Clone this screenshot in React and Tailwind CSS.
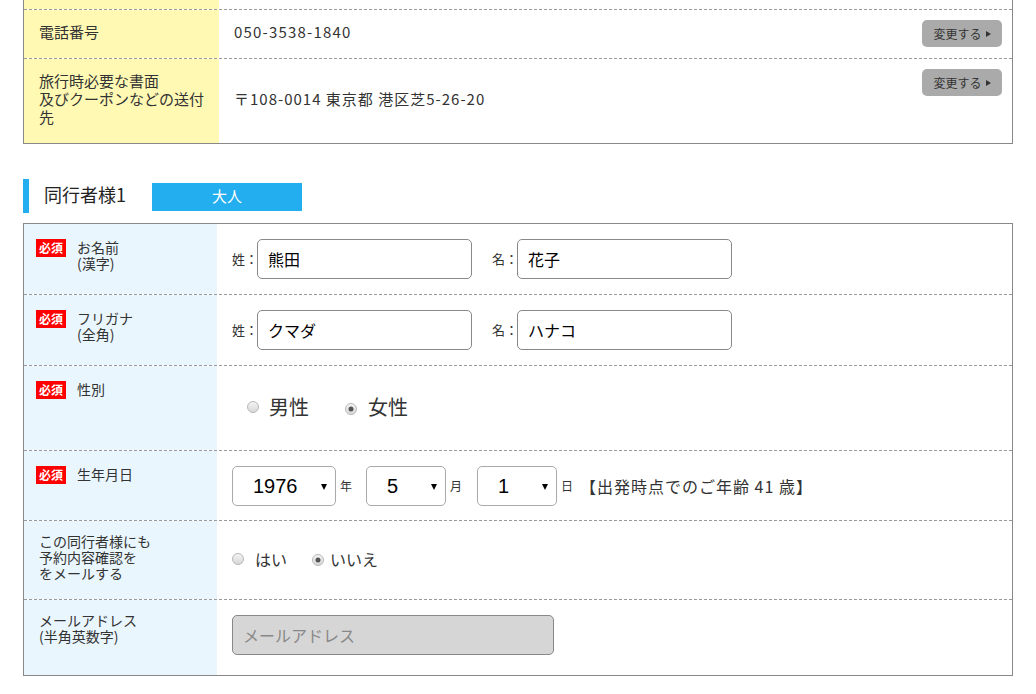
import React from "react";

const F = "font-['Meiryo','Noto_Sans_CJK_JP',sans-serif]";

function Badge() {
  return (
    <span className="inline-flex items-center justify-center w-[30px] h-[18px] bg-[#f00] text-white text-[12px] font-bold leading-none shrink-0">
      必須
    </span>
  );
}

function Radio({ checked }) {
  return (
    <span className="relative inline-block w-[12px] h-[12px] rounded-full border border-[#b8b8b8] bg-gradient-to-b from-[#f4f4f4] to-[#d8d8d8] shrink-0">
      {checked && (
        <span className="absolute left-1/2 top-1/2 -translate-x-1/2 -translate-y-1/2 w-[5px] h-[5px] rounded-full bg-[#555]" />
      )}
    </span>
  );
}

function ChangeBtn() {
  return (
    <div className="flex items-center justify-center gap-[4px] w-[80px] h-[27px] rounded-[5px] bg-[#aaaaaa] text-[12px] text-[#333]">
      <span>変更する</span>
      <span className="w-0 h-0 border-y-[3.5px] border-y-transparent border-l-[5px] border-l-[#333]" />
    </div>
  );
}

function Select({ value, w }) {
  return (
    <div className={`relative flex items-center h-[40px] rounded-[5px] border border-[#aaa] bg-white pl-[20px] text-[20px] text-black ${w}`}>
      <span className="font-['Liberation_Sans',sans-serif]">{value}</span>
      <span className="absolute right-[8px] top-[17px] w-0 h-0 border-x-[3.5px] border-x-transparent border-t-[6px] border-t-black" />
    </div>
  );
}

function TextInput({ value }) {
  return (
    <div className="flex items-center w-[215px] h-[40px] rounded-[5px] border border-[#888] bg-white pl-[10px] text-[16px] text-black">
      {value}
    </div>
  );
}

function LabelCell({ badge, children }) {
  return (
    <div
      className={`w-[193px] shrink-0 bg-[#eaf6fd] pl-[12px] flex gap-[11px] text-[14px] leading-[16px] text-[#333] whitespace-nowrap ${
        badge ? "pt-[15px]" : "pt-[12px]"
      }`}
    >
      {badge && <Badge />}
      <div className={badge ? "" : "pl-[3px]"}>{children}</div>
    </div>
  );
}

export default function App() {
  return (
    <div className={`w-[1036px] h-[694px] overflow-hidden bg-white text-[#333] ${F}`}>
      <div className="ml-[23px] w-[990px]">
        {/* top table */}
        <div className="border-x border-b border-[#888]">
          <div className="flex h-[9px]">
            <div className="w-[195px] bg-[#fff9b4]" />
            <div className="flex-1" />
          </div>
          <div className="flex h-[49px] border-t border-dashed border-[#999]">
            <div className="w-[195px] shrink-0 bg-[#fff9b4] flex items-center pl-[15px] pb-[3px] text-[15px]">
              電話番号
            </div>
            <div className="flex-1 flex justify-between pl-[15px] pr-[10px]">
              <div className="self-center pb-[3px] text-[15px] tracking-[1.2px]">050-3538-1840</div>
              <div className="pt-[10px]">
                <ChangeBtn />
              </div>
            </div>
          </div>
          <div className="flex h-[85px] border-t border-dashed border-[#999]">
            <div className="w-[195px] shrink-0 bg-[#fff9b4] flex items-center pl-[15px] pb-[4px] text-[15px] leading-[18px] whitespace-nowrap">
              <div>
                旅行時必要な書面
                <br />
                及びクーポンなどの送付
                <br />
                先
              </div>
            </div>
            <div className="flex-1 flex justify-between pl-[15px] pr-[10px]">
              <div className="self-center pb-[3px] text-[15px] tracking-[1px]">〒108-0014 東京都 港区芝5-26-20</div>
              <div className="pt-[10px]">
                <ChangeBtn />
              </div>
            </div>
          </div>
        </div>

        {/* heading */}
        <div className="mt-[35px] flex items-center h-[34px] border-l-[6px] border-[#22aeef]">
          <div className="pl-[15px] pb-[3px] text-[18px] text-[#222] w-[123px]">同行者様1</div>
          <div className="w-[150px] h-[28px] bg-[#22aeef] text-white text-[15px] flex items-center justify-center mt-[1px]">
            大人
          </div>
        </div>

        {/* bottom table */}
        <div className="mt-[10px] border border-[#888]">
          {/* name */}
          <div className="flex h-[70px]">
            <LabelCell badge>
              お名前
              <br />
              (漢字)
            </LabelCell>
            <div className="flex-1 flex items-center pl-[15px] text-[13px]">
              <span className="w-[25px]">姓：</span>
              <TextInput value="熊田" />
              <span className="ml-[20px] w-[25px]">名：</span>
              <TextInput value="花子" />
            </div>
          </div>
          {/* furigana */}
          <div className="flex h-[71px] border-t border-dashed border-[#999]">
            <LabelCell badge>
              フリガナ
              <br />
              (全角)
            </LabelCell>
            <div className="flex-1 flex items-center pl-[15px] text-[13px]">
              <span className="w-[25px]">姓：</span>
              <TextInput value="クマダ" />
              <span className="ml-[20px] w-[25px]">名：</span>
              <TextInput value="ハナコ" />
            </div>
          </div>
          {/* gender */}
          <div className="flex h-[85px] border-t border-dashed border-[#999]">
            <LabelCell badge>性別</LabelCell>
            <div className="flex-1 flex items-center pl-[30px] pb-[2px] text-[20px]">
              <Radio />
              <span className="ml-[10px]">男性</span>
              <span className="ml-[36px]">
                <Radio checked />
              </span>
              <span className="ml-[11px]">女性</span>
            </div>
          </div>
          {/* birthday */}
          <div className="flex h-[70px] border-t border-dashed border-[#999]">
            <LabelCell badge>生年月日</LabelCell>
            <div className="flex-1 flex items-center pl-[15px]">
              <Select value="1976" w="w-[104px]" />
              <span className="ml-[4px] text-[12px] w-[26px]">年</span>
              <Select value="5" w="w-[80px]" />
              <span className="ml-[4px] text-[12px] w-[27px]">月</span>
              <Select value="1" w="w-[80px]" />
              <span className="ml-[4px] text-[12px] w-[19px]">日</span>
              <span className="text-[16px] tracking-[1px]">【出発時点でのご年齢 41 歳】</span>
            </div>
          </div>
          {/* mail confirm */}
          <div className="flex h-[79px] border-t border-dashed border-[#999]">
            <LabelCell>
              この同行者様にも
              <br />
              予約内容確認を
              <br />
              をメールする
            </LabelCell>
            <div className="flex-1 flex items-center pl-[15px] pb-[2px] text-[16px]">
              <Radio />
              <span className="ml-[11px]">はい</span>
              <span className="ml-[25px]">
                <Radio checked />
              </span>
              <span className="ml-[6px]">いいえ</span>
            </div>
          </div>
          {/* email */}
          <div className="flex h-[76px] border-t border-dashed border-[#999]">
            <LabelCell>
              メールアドレス
              <br />
              (半角英数字)
            </LabelCell>
            <div className="flex-1 flex items-center pl-[15px] pb-[5px]">
              <div className="flex items-center w-[322px] h-[40px] rounded-[5px] border border-[#888] bg-[#d6d6d6] pl-[10px] text-[16px] text-[#888]">
                メールアドレス
              </div>
            </div>
          </div>
        </div>
      </div>
    </div>
  );
}
